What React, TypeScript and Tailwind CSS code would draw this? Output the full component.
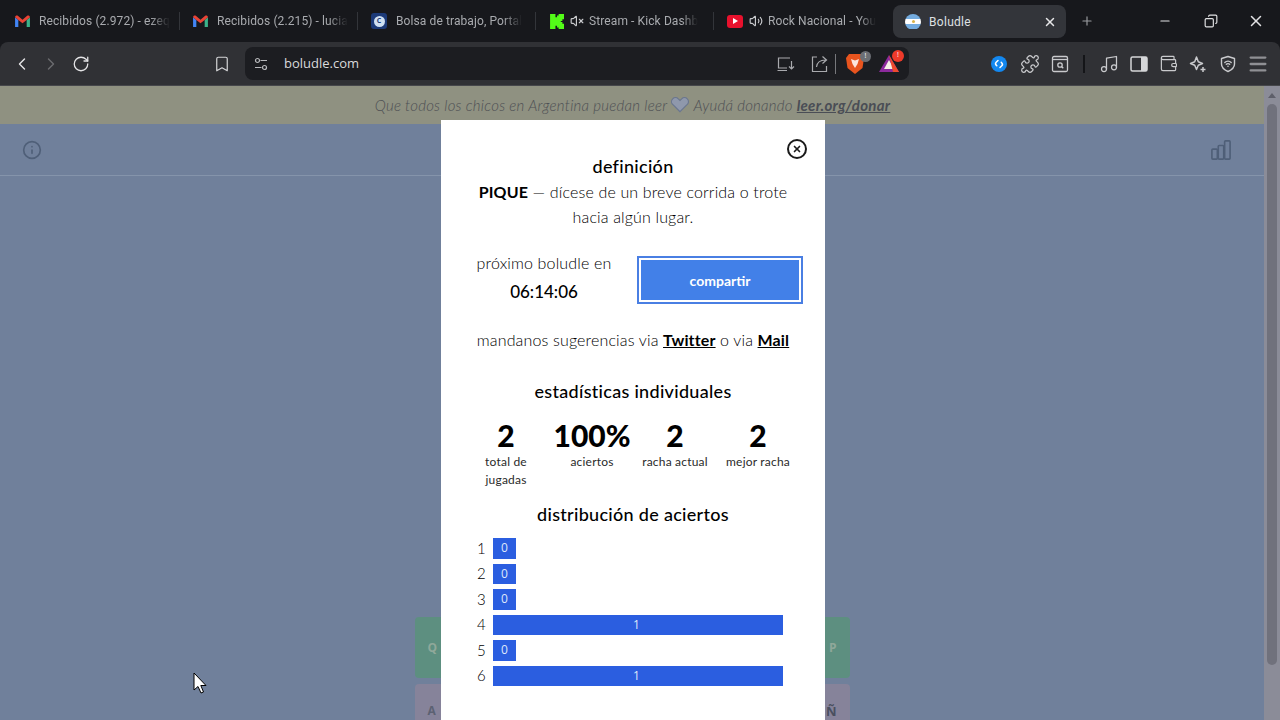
import {
  Bookmark,
  ChevronLeft,
  ChevronRight,
  Copy,
  Info,
  Menu,
  Minus,
  Music,
  Plus,
  Puzzle,
  RotateCw,
  VolumeX,
  Volume2,
  Wallet,
  X,
} from 'lucide-react';
import type { JSX } from 'react';

function GmailIcon() {
  return (
    <svg viewBox="0 0 16 14" className="h-[13px] w-[15px] shrink-0">
      <path d="M0 2.500 L0 13 L3.500 13 L3.500 5.500 Z" fill="#4285f4" />
      <path d="M12.500 5.500 L12.500 13 L16 13 L16 2.500 Z" fill="#3bb28a" />
      <path d="M0 2.500 C0 0.500 2 0 3 0.800 L8 5 L13 0.800 C14 0 16 0.500 16 2.500 L12.500 5.500 L8 9 L3.500 5.500 Z" fill="#ea4335" />
    </svg>
  );
}

function CompuIcon() {
  return (
    <div className="flex h-4 w-4 shrink-0 items-center justify-center rounded-[3px] bg-[#1c3a78]">
      <div className="flex h-[11px] w-[11px] items-center justify-center rounded-full bg-[#cfe0f2] text-[7px] font-bold text-[#1c3a78]">
        C
      </div>
    </div>
  );
}

function KickIcon() {
  return (
    <svg viewBox="0 0 14 14" className="h-[15px] w-[15px] shrink-0">
      <path d="M1 0h5v3h1.500V1.500H9V0h5v5h-1.500v1.500H11v1h1.500V9H14v5H9v-1.500H7.500V11H6v3H1z" fill="#53fc18" />
    </svg>
  );
}

function YoutubeIcon() {
  return (
    <div className="flex h-[13px] w-4 shrink-0 items-center justify-center rounded-[3px] bg-[#e8112d]">
      <div className="h-0 w-0 border-y-[3px] border-l-[5px] border-y-transparent border-l-white" />
    </div>
  );
}

function FlagIcon() {
  return (
    <div className="flex h-4 w-4 shrink-0 flex-col overflow-hidden rounded-full">
      <div className="flex-1 bg-[#74acdf]" />
      <div className="flex flex-1 items-center justify-center bg-white">
        <div className="h-[3px] w-[3px] rounded-full bg-[#d9b44a]" />
      </div>
      <div className="flex-1 bg-[#74acdf]" />
    </div>
  );
}

type TabProps = {
  icon: JSX.Element;
  sound?: JSX.Element;
  title: string;
  last?: boolean;
};

function Tab({ icon, sound, title, last }: TabProps) {
  return (
    <div className="flex h-[36px] w-[178px] shrink-0 items-center">
      <div
        className={`flex h-[18px] min-w-0 flex-1 items-center pl-[13px] ${
          last ? '' : 'border-r border-[#33353a]'
        }`}
      >
        {icon}
        {sound}
        <span
          className={`whitespace-nowrap font-['Roboto',sans-serif] text-[12px] tracking-[0.1px] text-[#a9abaf] [mask-image:linear-gradient(to_right,black_85%,transparent)] ${
            sound ? 'ml-[5px]' : 'ml-[9px]'
          }`}
        >
          {title}
        </span>
      </div>
    </div>
  );
}

function BraveIcon() {
  return (
    <div className="relative h-[22px] w-[22px]">
      <svg viewBox="0 0 18 22" className="h-[22px] w-[18px]">
        <path d="M3 1h12l3 4-1.500 10L9 21 1.500 15 0 5z" fill="#e8541e" />
        <path d="M5 6l4 1.500L13 6l-1.500 5L9 15l-2.500-4z" fill="#fff" opacity=".85" />
      </svg>
      <div className="absolute right-[-3px] top-[-2px] flex h-[11px] w-[11px] items-center justify-center rounded-full bg-[#6b6e74] text-[7px] text-white">
        !
      </div>
    </div>
  );
}

function BatIcon() {
  return (
    <div className="relative h-[20px] w-[22px]">
      <svg viewBox="0 0 20 18" className="h-[18px] w-[20px]">
        <path d="M10 1 L20 18 L0 18 Z" fill="#8c2a9c" />
        <path d="M10 6 L15 15 L5 15 Z" fill="#f6f0e6" />
        <path d="M10 1 L20 18 L14 18 Z" fill="#ee4a2e" />
      </svg>
      <div className="absolute right-[-3px] top-[-4px] flex h-[12px] w-[12px] items-center justify-center rounded-full bg-[#ee3a2a] text-[7px] text-white">
        !
      </div>
    </div>
  );
}

function ShazamIcon() {
  return (
    <svg viewBox="0 0 16 16" className="h-4 w-4">
      <circle cx="8" cy="8" r="8" fill="#1388f0" />
      <path
        d="M7 4.500 5.200 6.300a2 2 0 0 0 0 2.800l.6.600M9 11.500l1.800-1.800a2 2 0 0 0 0-2.800l-.6-.6"
        fill="none"
        stroke="#fff"
        strokeWidth="1.500"
        strokeLinecap="round"
      />
    </svg>
  );
}

function LeoIcon() {
  return (
    <svg viewBox="0 0 18 18" className="h-[18px] w-[18px]" fill="none" stroke="#c9cacd" strokeWidth="1.500">
      <path d="M7.500 2 9.300 6.700 13.500 8.500 9.300 10.300 7.500 14.500 5.700 10.300 1.500 8.500 5.700 6.700Z" strokeLinejoin="round" />
      <path d="M14 12v5M11.500 14.500h5" stroke="#c9cacd" />
    </svg>
  );
}

function VpnIcon() {
  return (
    <svg viewBox="0 0 18 18" className="h-[18px] w-[18px]" fill="none" stroke="#c9cacd" strokeWidth="1.400">
      <path d="M9 1.500 15.500 3.500V9c0 3.500-3 6-6.500 7.500C5.500 15 2.500 12.500 2.500 9V3.500Z" strokeLinejoin="round" />
      <path d="M5.800 7.500a4.500 4.500 0 0 1 6.400 0M7.300 9.300a2.400 2.400 0 0 1 3.400 0" strokeLinecap="round" />
      <circle cx="9" cy="11.300" r=".8" fill="#c9cacd" stroke="none" />
    </svg>
  );
}

function SiteSettingsIcon() {
  return (
    <svg viewBox="0 0 14 14" className="h-[14px] w-[14px]" fill="none" stroke="#b9babd" strokeWidth="1.200">
      <circle cx="3.500" cy="3.500" r="2" />
      <path d="M6.500 3.500H13M1 10.500h6.500" />
      <circle cx="10.500" cy="10.500" r="2" />
    </svg>
  );
}

function ShareIcon() {
  return (
    <svg viewBox="0 0 18 18" className="h-[18px] w-[18px]" fill="none" stroke="#a9aaae" strokeWidth="1.200">
      <path d="M6 2H1.500v14.500h14V11" />
      <path d="M5.500 12c.5-4.500 3.500-7 9-7M11.500 1.500 15.500 5l-4 3.500" />
    </svg>
  );
}

function InstallIcon() {
  return (
    <svg viewBox="0 0 18 16" className="h-4 w-[18px]" fill="none" stroke="#a9aaae" strokeWidth="1.200">
      <path d="M13 2H1.500v10H10M0.500 14.500H10" />
      <path d="M14.500 5v8M12 10.500l2.500 2.500 2.500-2.500" />
    </svg>
  );
}

function PagePanelIcon() {
  return (
    <svg viewBox="0 0 18 18" className="h-[18px] w-[18px]" fill="none" stroke="#c9cacd" strokeWidth="1.300">
      <rect x="1.500" y="1.500" width="15" height="15" rx="1.500" />
      <path d="M1.500 4.500h15" />
      <circle cx="9" cy="10" r="2.200" />
      <path d="M10.500 11.500l1.800 1.800" />
    </svg>
  );
}

function SidebarIcon() {
  return (
    <svg viewBox="0 0 18 18" className="h-[18px] w-[18px]">
      <rect x="1" y="2" width="16" height="14" rx="1.500" fill="none" stroke="#d5d6d8" strokeWidth="1.500" />
      <rect x="11" y="2" width="6" height="14" fill="#d5d6d8" />
    </svg>
  );
}

function BarsIcon() {
  return (
    <svg viewBox="0 0 22 22" className="h-[20px] w-[20px]" fill="none" stroke="#4f5f78" strokeWidth="1.800" strokeLinejoin="round">
      <rect x="1" y="10" width="6" height="11" rx="1" />
      <rect x="8" y="6" width="6" height="15" rx="1" />
      <rect x="15" y="1" width="6" height="20" rx="1" />
    </svg>
  );
}

type StatProps = { value: string; label: string; width: string };

function Stat({ value, label, width }: StatProps) {
  return (
    <div className={`flex shrink-0 flex-col items-center text-center ${width}`}>
      <div className="text-[30px] font-black leading-[34px] text-black">{value}</div>
      <div className="mt-[1px] text-[12px] font-normal leading-[17.500px] tracking-[0.2px] text-[#2a2a2a]">{label}</div>
    </div>
  );
}

const guesses = [
  { n: 1, value: 0 },
  { n: 2, value: 0 },
  { n: 3, value: 0 },
  { n: 4, value: 1 },
  { n: 5, value: 0 },
  { n: 6, value: 1 },
];

export default function App() {
  return (
    <div className="relative flex h-[720px] w-[1280px] flex-col overflow-hidden bg-[#17181c] font-['Open_Sans',sans-serif]">
      {/* Tab strip */}
      <div className="flex h-[42px] shrink-0 items-start pl-[2px] pt-[3px]">
        <Tab icon={<GmailIcon />} title="Recibidos (2.972) - ezeq" />
        <Tab icon={<GmailIcon />} title="Recibidos (2.215) - lucia" />
        <Tab icon={<CompuIcon />} title="Bolsa de trabajo, Portal" />
        <Tab
          icon={<KickIcon />}
          sound={<VolumeX className="ml-[6px] h-[14px] w-[14px] shrink-0 text-[#c9cacd]" />}
          title="Stream - Kick Dashb"
        />
        <Tab
          icon={<YoutubeIcon />}
          sound={<Volume2 className="ml-[6px] h-[14px] w-[14px] shrink-0 text-[#c9cacd]" />}
          title="Rock Nacional - You"
          last
        />
        <div className="ml-[1px] mt-[2px] flex h-[33px] w-[173px] shrink-0 items-center rounded-[8px] bg-[#33353a] pl-[12px] pr-[9px]">
          <FlagIcon />
          <span className="ml-[8px] flex-1 font-['Roboto',sans-serif] text-[12px] tracking-[0.3px] text-[#dfe0e2]">Boludle</span>
          <X className="h-[14px] w-[14px] text-[#e6e6e8]" strokeWidth={2.500} />
        </div>
        <Plus className="ml-[14px] mt-[11px] h-[14px] w-[14px] text-[#9a9b9f]" />
        <div className="ml-[64px] mt-[9px] flex items-center gap-[32px] text-[#e2e2e4]">
          <Minus className="h-[14px] w-[14px]" />
          <Copy className="h-[14px] w-[14px] -scale-x-100" />
          <X className="ml-[-3px] h-[18px] w-[18px]" />
        </div>
      </div>

      {/* Toolbar */}
      <div className="flex h-[44px] shrink-0 items-center rounded-t-[8px] border-b border-[#46474b] bg-[#303135] pl-[12px]">
        <ChevronLeft className="h-[20px] w-[20px] text-[#e4e4e6]" strokeWidth={1.700} />
        <ChevronRight className="ml-[9px] h-[20px] w-[20px] text-[#6a6b6f]" strokeWidth={1.700} />
        <RotateCw className="ml-[11px] h-[18px] w-[18px] text-[#e4e4e6]" strokeWidth={1.700} />
        <Bookmark className="ml-[123px] h-[18px] w-[18px] text-[#d5d6d8]" strokeWidth={1.600} />
        <div className="ml-[14px] flex h-[33px] w-[664px] items-center rounded-[8px] bg-[#1c1d21] pl-[9px] pr-[8px]">
          <SiteSettingsIcon />
          <span className="ml-[16px] flex-1 text-[13px] text-[#d9dadc]">boludle.com</span>
          <InstallIcon />
          <div className="ml-[16px]"><ShareIcon /></div>
          <div className="ml-[6px] h-[20px] w-px bg-[#77787c]" />
          <div className="ml-[10px]"><BraveIcon /></div>
          <div className="ml-[11px]"><BatIcon /></div>
        </div>
        <div className="ml-[82px]"><ShazamIcon /></div>
        <Puzzle className="ml-[13px] h-[20px] w-[20px] text-[#c9cacd]" strokeWidth={1.500} />
        <div className="ml-[11px]"><PagePanelIcon /></div>
        <div className="ml-[14px] h-[18px] w-[2px] bg-[#141518]" />
        <Music className="ml-[14px] h-[20px] w-[20px] text-[#c9cacd]" strokeWidth={1.500} />
        <div className="ml-[11px]"><SidebarIcon /></div>
        <Wallet className="ml-[11px] h-[19px] w-[19px] text-[#c9cacd]" strokeWidth={1.500} />
        <div className="ml-[11px]"><LeoIcon /></div>
        <div className="ml-[12px]"><VpnIcon /></div>
        <Menu className="ml-[10px] h-[22px] w-[22px] text-[#8f9094]" strokeWidth={2.500} />
      </div>

      {/* Page */}
      <div className="relative flex min-h-0 flex-1">
        <div className="flex min-w-0 flex-1 flex-col bg-[#70809b]">
          <div className="flex h-[38px] shrink-0 items-center justify-center bg-[#8f9181] pl-[1px] font-['Lato',sans-serif] text-[15px] font-light italic tracking-[0.25px] text-[#4e5054]">
            <span>Que todos los chicos en Argentina puedan leer</span>
            <svg viewBox="0 0 16 14" className="mx-[4px] h-[16px] w-[18px]" fill="#8f98ac" stroke="#6a768e">
              <path d="M8 13 1.500 6.500a3.500 3.500 0 0 1 5-5L8 3l1.500-1.500a3.500 3.500 0 0 1 5 5z" />
            </svg>
            <span>Ayudá donando</span>
            <span className="ml-[4px] font-bold text-[#4a4d55] underline">leer.org/donar</span>
          </div>
          <div className="flex h-[52px] shrink-0 items-center justify-between border-b border-[#8594ab] pl-[22px] pr-[33px]">
            <Info className="h-[20px] w-[20px] text-[#4f5f78]" strokeWidth={2} />
            <BarsIcon />
          </div>
          {/* Keyboard behind the modal */}
          <div className="flex flex-1 flex-col items-center pt-[441px] text-[12px] font-bold text-[#8fa89a]">
            <div className="flex h-[61px] w-[435px] items-center justify-between rounded-[4px] bg-[#5d8f80] px-[13px]">
              <span>Q</span>
              <span>P</span>
            </div>
            <div className="mt-[6px] flex h-[60px] w-[435px] items-start justify-between rounded-[4px] bg-[#86839a] px-[13px] pt-[18px] text-[#5c6172]">
              <span>A</span>
              <span className="text-[13px] text-[#4a4f5f]">Ñ</span>
            </div>
          </div>
        </div>

        {/* Scrollbar */}
        <div className="flex w-[16px] shrink-0 flex-col items-center bg-[#8b8c98] pt-[7px]">
          <div className="h-0 w-0 border-x-[4px] border-b-[5px] border-x-transparent border-b-[#5e5f6a]" />
          <div className="mt-[6px] h-[561px] w-[10px] rounded-[5px] bg-[#70717c]" />
        </div>

        {/* Modal */}
        <div className="absolute left-[441px] top-[34px] flex h-[600px] w-[384px] flex-col items-center bg-white font-['Lato',sans-serif] text-black">
          <div className="absolute right-[18px] top-[19px] flex h-[20px] w-[20px] items-center justify-center rounded-full border-2 border-[#1a1a1a]">
            <X className="h-[10px] w-[10px] text-[#1a1a1a]" strokeWidth={4} />
          </div>
          <h2 className="mt-[34px] text-[18px] font-medium leading-[25px] tracking-[0.3px]">definición</h2>
          <p className="w-[330px] text-center text-[16px] font-light leading-[25px] tracking-[0.15px]">
            <strong className="font-bold">PIQUE</strong> — dícese de un breve corrida o trote hacia algún lugar.
          </p>
          <div className="mt-[23px] flex w-full items-start pl-[24px]">
            <div className="flex w-[158px] flex-col items-center">
              <span className="whitespace-nowrap text-[16px] font-light leading-[22px] tracking-[0.15px]">próximo boludle en</span>
              <span className="mt-[6px] text-[17px] font-medium leading-[24px]">06:14:06</span>
            </div>
            <button className="ml-[14px] mt-[4px] h-[48px] w-[166px] border-2 border-[#4a7fe3] bg-white p-[2px]">
              <div className="flex h-full w-full items-center justify-center bg-[#4280e8] text-[14px] font-bold text-white">
                compartir
              </div>
            </button>
          </div>
          <p className="mt-[23px] whitespace-nowrap text-[16px] font-light leading-[25px] tracking-[0.15px]">
            mandanos sugerencias via <a className="font-bold underline">Twitter</a> o via{' '}
            <a className="font-bold underline">Mail</a>
          </p>
          <h2 className="mt-[27px] text-[18px] font-medium leading-[25px] tracking-[0.3px]">estadísticas individuales</h2>
          <div className="mt-[14px] flex w-full pl-[39px]">
            <Stat value="2" label="total de jugadas" width="w-[52px]" />
            <div className="ml-[22px]"><Stat value="100%" label="aciertos" width="w-[76px]" /></div>
            <div className="ml-[7px]"><Stat value="2" label="racha actual" width="w-[76px]" /></div>
            <div className="ml-[7px]"><Stat value="2" label="mejor racha" width="w-[76px]" /></div>
          </div>
          <h2 className="mt-[14px] text-[18px] font-medium leading-[25px] tracking-[0.3px]">distribución de aciertos</h2>
          <div className="mt-[11px] flex w-full flex-col gap-[5px] pl-[34px]">
            {guesses.map((g) => (
              <div key={g.n} className="flex h-[20.500px] items-center">
                <span className="w-[18px] pl-[2px] text-[15px] font-light leading-none">{g.n}</span>
                {g.value === 0 ? (
                  <div className="flex h-full w-[23px] items-center bg-[#2b5ee0] pl-[8px] font-['Open_Sans',sans-serif] text-[12px] text-[#dfe8fb]">0</div>
                ) : (
                  <div className="flex h-full w-[290px] items-center justify-center bg-[#2b5ee0] pr-[3px] font-['Open_Sans',sans-serif] text-[12px] text-[#dfe8fb]">1</div>
                )}
              </div>
            ))}
          </div>
        </div>
      </div>

      {/* Mouse pointer */}
      <svg viewBox="0 0 14 22" className="absolute left-[193px] top-[672px] h-[22px] w-[14px]">
        <path d="M1 1 L1 18 L5 14.500 L8 21 L10.500 20 L7.800 13.500 L13 13.500 Z" fill="#fff" stroke="#000" strokeWidth="1" />
      </svg>
    </div>
  );
}
